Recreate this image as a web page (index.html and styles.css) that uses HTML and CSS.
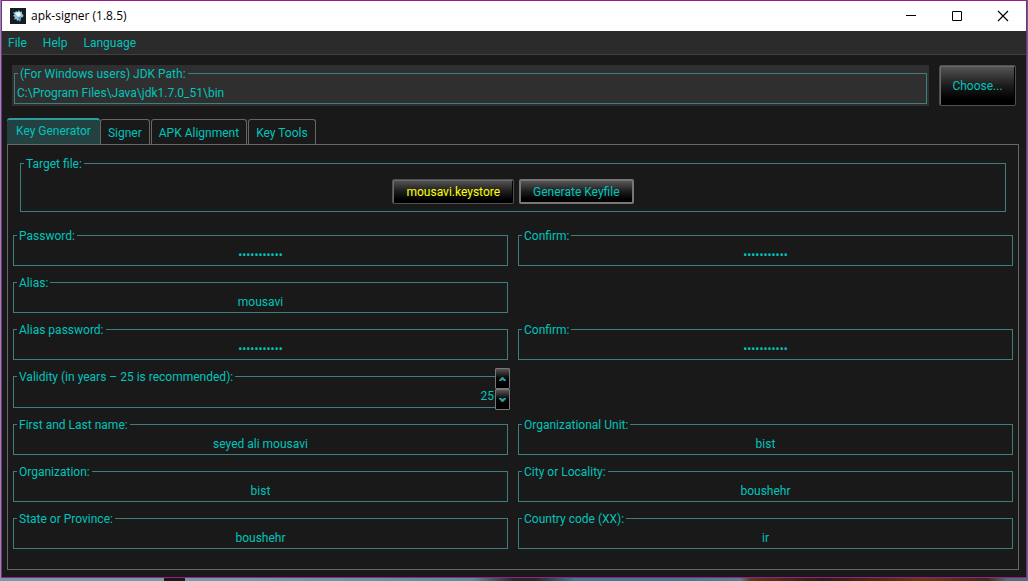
FILE: index.html
```html
<!DOCTYPE html>
<html lang="en">
<head>
<meta charset="utf-8">
<title>apk-signer (1.8.5)</title>
<link rel="stylesheet" href="styles.css">
</head>
<body>
<div class="window">
  <header class="titlebar">
    <svg class="app-icon" width="16" height="16" viewBox="0 0 16 16" aria-hidden="true">
      <rect width="16" height="16" fill="#141c21"/>
      <path d="M3 4l2 .5L6 3l1.500 1L9 2l1 2 2-.5V6l1.500 1L13 9l-2 .5-.5 2.500L10 14l-1-2-2 1-.5-2L4 11.500 5 9 3 8l1.500-1.500z" fill="#8fc3da"/>
      <path d="M5 5l4-1 2 2-1 3-3-1z" fill="#e4f6fc"/>
      <path d="M8 10l3-2-1.500 4z" fill="#4d86a5"/>
    </svg>
    <h1 class="title">apk-signer (1.8.5)</h1>
    <div class="window-controls">
      <button class="window-button" aria-label="Minimize"><svg width="12" height="12" viewBox="0 0 12 12"><path d="M1 5.500h10" stroke="#000"/></svg></button>
      <button class="window-button" aria-label="Maximize"><svg width="12" height="12" viewBox="0 0 12 12"><path d="M1.500 1.500h9v9h-9z" fill="none" stroke="#000"/></svg></button>
      <button class="window-button" aria-label="Close"><svg width="12" height="12" viewBox="0 0 12 12"><path d="M1 1l10 10M11 1L1 11" stroke="#000" stroke-width="1.200"/></svg></button>
    </div>
  </header>
  <nav class="menubar">
    <button class="menu">File</button>
    <button class="menu">Help</button>
    <button class="menu">Language</button>
  </nav>
  <main class="content">
    <div class="jdk-row">
      <div class="jdk-panel">
        <fieldset class="group">
          <legend><label for="jdk">(For Windows users) JDK Path:</label></legend>
          <input class="field field-path" id="jdk" type="text" value="C:\Program Files\Java\jdk1.7.0_51\bin">
        </fieldset>
      </div>
      <button class="button button-choose">Choose...</button>
    </div>
    <div class="tabs" role="tablist">
      <button class="tab tab-active" role="tab" aria-selected="true">Key Generator</button>
      <button class="tab" role="tab" aria-selected="false">Signer</button>
      <button class="tab" role="tab" aria-selected="false">APK Alignment</button>
      <button class="tab" role="tab" aria-selected="false">Key Tools</button>
    </div>
    <section class="pane" role="tabpanel" aria-label="Key Generator">
      <fieldset class="group target">
        <legend>Target file:</legend>
        <div class="target-actions">
          <button class="button button-file">mousavi.keystore</button>
          <button class="button button-default">Generate Keyfile</button>
        </div>
      </fieldset>
      <form class="form">
        <fieldset class="group">
          <legend><label for="password">Password:</label></legend>
          <input class="field" id="password" type="password" value="abcdefghijk" autocomplete="off">
        </fieldset>
        <fieldset class="group">
          <legend><label for="confirm">Confirm:</label></legend>
          <input class="field" id="confirm" type="password" value="abcdefghijk" autocomplete="off">
        </fieldset>
        <fieldset class="group first-column">
          <legend><label for="alias">Alias:</label></legend>
          <input class="field" id="alias" type="text" value="mousavi">
        </fieldset>
        <fieldset class="group first-column">
          <legend><label for="alias-password">Alias password:</label></legend>
          <input class="field" id="alias-password" type="password" value="abcdefghijk" autocomplete="off">
        </fieldset>
        <fieldset class="group">
          <legend><label for="alias-confirm">Confirm:</label></legend>
          <input class="field" id="alias-confirm" type="password" value="abcdefghijk" autocomplete="off">
        </fieldset>
        <div class="spinner first-column">
          <fieldset class="group">
            <legend><label for="validity">Validity (in years – 25 is recommended):</label></legend>
            <input class="field field-number" id="validity" type="number" value="25">
          </fieldset>
          <div class="stepper">
            <button class="step" type="button" aria-label="Increase"><svg width="7" height="4" viewBox="0 0 7 4"><path d="M0 4V3L3 0h1l3 3v1H5L3.500 3 2 4z" fill="#2a9d9d"/></svg></button>
            <button class="step" type="button" aria-label="Decrease"><svg width="7" height="4" viewBox="0 0 7 4"><path d="M0 0v1l3 3h1l3-3V0H5L3.500 1 2 0z" fill="#2a9d9d"/></svg></button>
          </div>
        </div>
        <fieldset class="group first-column">
          <legend><label for="name">First and Last name:</label></legend>
          <input class="field" id="name" type="text" value="seyed ali mousavi">
        </fieldset>
        <fieldset class="group">
          <legend><label for="unit">Organizational Unit:</label></legend>
          <input class="field" id="unit" type="text" value="bist">
        </fieldset>
        <fieldset class="group">
          <legend><label for="organization">Organization:</label></legend>
          <input class="field" id="organization" type="text" value="bist">
        </fieldset>
        <fieldset class="group">
          <legend><label for="city">City or Locality:</label></legend>
          <input class="field" id="city" type="text" value="boushehr">
        </fieldset>
        <fieldset class="group">
          <legend><label for="state">State or Province:</label></legend>
          <input class="field" id="state" type="text" value="boushehr">
        </fieldset>
        <fieldset class="group">
          <legend><label for="country">Country code (XX):</label></legend>
          <input class="field" id="country" type="text" value="ir">
        </fieldset>
      </form>
    </section>
  </main>
</div>
</body>
</html>
```
FILE: styles.css
```css
* {
  box-sizing: border-box;
}

body {
  margin: 0;
  min-height: 100vh;
  padding: 0 1px 3px;
  display: flex;
  background: linear-gradient(90deg, #6f9fa5 0 16%, #17191b 16% 18%, #6f9fa5 18% 24%, #5a8f98 46%, #24292b 50% 52%, #3f7c93 56% 66%, #55808a 72%, #5c3a1c 73%, #2c1d14 80%, #6b3a12 90%, #3a2a20 96%, #4c7078 98%);
  color: #00c4bc;
  font: 12px/15px Roboto, sans-serif;
}

button,
input {
  font: inherit;
  color: inherit;
}

.window {
  flex: 1;
  display: flex;
  flex-direction: column;
  border: 1px solid #9b1d8c;
  background: #191919;
}

.titlebar {
  display: flex;
  align-items: center;
  height: 30px;
  padding-left: 8px;
  background: #fff;
}

.title {
  margin: 0 auto 0 5px;
  font: 12px/16px "Open Sans", "Noto Sans", sans-serif;
  color: #000;
}

.window-controls {
  display: flex;
  align-self: stretch;
}

.window-button {
  display: flex;
  align-items: center;
  justify-content: center;
  width: 46px;
  padding: 0;
  border: 0;
  background: none;
}

.menubar {
  display: flex;
  gap: 16px;
  height: 24px;
  padding: 0 6px;
  border-bottom: 1px solid #404040;
  background: #2b2b2b;
}

.menu {
  padding: 2px 0 0;
  border: 0;
  background: none;
}

.content {
  flex: 1;
  display: flex;
  flex-direction: column;
  padding: 10px 7px 7px 5px;
}

.jdk-row {
  display: flex;
  gap: 10px;
  padding: 0 3px 0 5px;
}

.jdk-panel {
  flex: 1;
  padding: 0 2px 2px;
  background: #2f2f2f;
}

.group {
  min-width: 0;
  margin: 0;
  padding: 0 3px;
  border: 1px solid #3d7f7f;
}

.group legend {
  padding: 2px 2px 0;
}

.field {
  display: block;
  width: 100%;
  height: 21px;
  padding: 1px 0 0;
  border: 0;
  outline: 0;
  background: none;
  text-align: center;
}

.jdk-panel .group {
  padding: 0 2px;
}

.jdk-panel legend {
  margin-left: 1px;
}

.field-path {
  text-align: left;
}

.button {
  padding: 2px 0 0;
  border: 1px solid #505050;
  border-radius: 2px;
  background: linear-gradient(#565656, #1c1c1c 50%, #000 85%);
  box-shadow: inset 1px 1px #6a6a6a, inset -1px 0 #000;
}

.button-choose {
  width: 77px;
}

.tabs {
  display: flex;
  align-items: flex-end;
  gap: 1px;
  margin-top: 12px;
}

.tab {
  height: 25px;
  padding: 3px 7px 0;
  border: 1px solid #666;
  border-bottom: 0;
  border-radius: 3px 3px 0 0;
  background: none;
}

.tab-active {
  height: 26px;
  margin-right: -1px;
  padding: 0 9px 2px;
  border: 0;
  border-top: 2px solid #2a9d9d;
  background: #234140;
}

.pane {
  flex: 1;
  padding: 10px 5px 20px;
  border: 1px solid #666;
}

.target {
  margin: 0 7px 15px;
}

.target-actions {
  display: flex;
  justify-content: center;
  gap: 5px;
  padding: 7px 0;
}

.target-actions .button {
  height: 25px;
  padding: 2px 13px 0;
}

.button-file {
  color: #ff0;
}

.target-actions .button-default {
  padding: 2px 12px 0;
  border: 2px solid #777;
  box-shadow: none;
}

.form {
  display: grid;
  grid-template-columns: 1fr 1fr;
  gap: 8px 10px;
}

.first-column {
  grid-column-start: 1;
}

.spinner {
  position: relative;
}

.field-number {
  height: 22px;
  padding: 0 10px 0 0;
  appearance: textfield;
  text-align: right;
}

.field-number::-webkit-inner-spin-button {
  display: none;
}

.stepper {
  position: absolute;
  top: 0;
  right: -2px;
  display: flex;
  flex-direction: column;
}

.step {
  display: flex;
  align-items: center;
  justify-content: center;
  width: 15px;
  height: 21px;
  padding: 0;
  border: 1px solid #777;
  border-radius: 1px;
  background: linear-gradient(#565656, #000 50%);
}
```
